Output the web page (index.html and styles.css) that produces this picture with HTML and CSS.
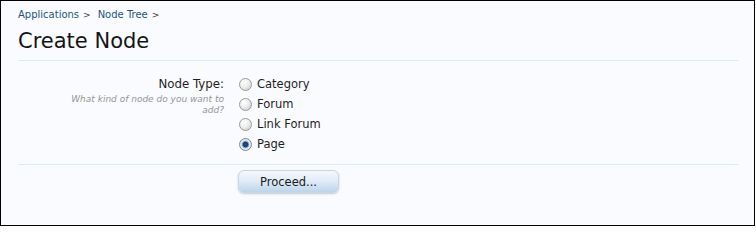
FILE: index.html
```html
<!DOCTYPE html>
<html>
<head>
<meta charset="utf-8">
<link rel="stylesheet" href="styles.css">
</head>
<body>
<div class="frame">
  <nav class="crumbs">
    <a class="crumb" href="#">Applications</a><span class="sep">&gt;</span>
    <a class="crumb" href="#">Node Tree</a><span class="sep">&gt;</span>
  </nav>
  <h1 class="title">Create Node</h1>
  <form class="form">
    <div class="unit">
      <div class="label-col">
        <div class="label">Node Type:</div>
        <div class="hint">What kind of node do you want to add?</div>
      </div>
      <div class="options">
        <label class="opt"><input type="radio" name="t" class="radio"><span>Category</span></label>
        <label class="opt"><input type="radio" name="t" class="radio"><span>Forum</span></label>
        <label class="opt"><input type="radio" name="t" class="radio"><span>Link Forum</span></label>
        <label class="opt"><input type="radio" name="t" class="radio" checked><span>Page</span></label>
      </div>
    </div>
    <div class="submit-row">
      <button type="button" class="button">Proceed...</button>
    </div>
  </form>
</div>
</body>
</html>
```

FILE: styles.css
```css
html, body {
  margin: 0;
  padding: 0;
  background: #ffffff;
}
body {
  font-family: "DejaVu Sans", Verdana, sans-serif;
  color: #1e1e1e;
}
.frame {
  width: 755px;
  height: 226px;
  box-sizing: border-box;
  border: 1px solid #000;
  background: #fafbff;
  padding: 0 16px 0 17px;
}
.crumbs {
  margin-top: 7px;
  font-size: 10px;
  line-height: 14px;
  height: 14px;
  display: flex;
  align-items: center;
}
.crumb {
  color: #23557c;
  text-decoration: none;
}
.sep {
  color: #3a3a3a;
  font-size: 9px;
  margin: 0 7px 0 4px;
}
.title {
  margin: 6px 0 0 0;
  font-size: 21px;
  line-height: 26px;
  font-weight: normal;
  color: #141414;
  padding-bottom: 6px;
  border-bottom: 1px solid #d9ecf4;
}
.form {
  margin: 0;
}
.unit {
  display: grid;
  grid-template-columns: 206px 1fr;
  column-gap: 14px;
  padding-top: 13px;
  padding-bottom: 10px;
  border-bottom: 1px solid #d9ecf4;
}
.label-col {
  text-align: right;
}
.label {
  font-size: 11.8px;
  line-height: 20px;
  color: #1e1e1e;
}
.hint {
  font-size: 9px;
  line-height: 11px;
  font-style: italic;
  color: #959595;
  padding-left: 50px;
}
.options {
  display: flex;
  flex-direction: column;
}
.opt {
  display: flex;
  align-items: center;
  height: 20px;
  font-size: 11.5px;
  color: #1e1e1e;
}
.radio {
  appearance: none;
  -webkit-appearance: none;
  margin: 0 5px 0 1px;
  width: 13px;
  height: 13px;
  border-radius: 50%;
  border: 1px solid #9a9a9a;
  box-sizing: border-box;
  background: radial-gradient(circle at 35% 30%, #ffffff 0%, #f0f0f0 40%, #c8c8c8 100%);
}
.radio:checked {
  border-color: #7d8a96;
  background: radial-gradient(circle at 50% 50%, #1f4f86 0%, #173d6a 28%, #7fa7cf 42%, #e9eef3 55%, #c8ccd0 100%);
}
.submit-row {
  display: grid;
  grid-template-columns: 206px 1fr;
  column-gap: 14px;
  padding-top: 5px;
}
.submit-row .button {
  grid-column: 2;
}
.button {
  width: 101px;
  height: 23px;
  border: 1px solid #c5d7e6;
  border-radius: 6px;
  background: linear-gradient(to bottom, #f4f8fc 0%, #e2edf7 45%, #bcd5ea 100%);
  box-shadow: 0 1px 2px rgba(120, 140, 160, 0.45);
  font-family: "DejaVu Sans", Verdana, sans-serif;
  font-size: 11.5px;
  color: #1a1a1a;
  padding: 0;
  cursor: pointer;
}
```
